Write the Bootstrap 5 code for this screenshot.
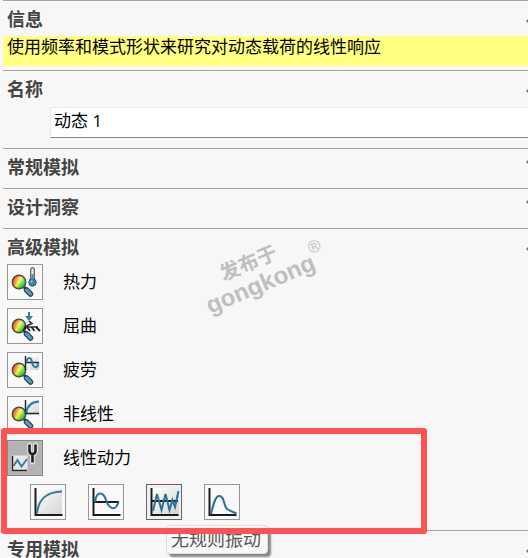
<!DOCTYPE html>
<html lang="zh-CN">
<head>
<meta charset="utf-8">
<meta name="viewport" content="width=device-width, initial-scale=1">
<title>算例</title>
<link href="https://cdn.jsdelivr.net/npm/bootstrap@5.3.0/dist/css/bootstrap.min.css" rel="stylesheet">
<style>
body{background:#f7f7f7;color:#000;font-family:"Open Sans","Noto Sans CJK SC",sans-serif;font-size:17px;line-height:24px}
.panel{padding-left:3px;overflow:hidden}
.group{border-top:1px solid #a6a6a6}
.group-title{font-size:18px;height:35px;line-height:37px;font-weight:700;color:#444;padding-left:4px}
.toggle{width:16px;height:35px;margin-right:-14px;color:#777}
.group.closing .group-title{height:27px;line-height:18px;padding-top:9px}
.group.closing .toggle{height:27px;overflow:hidden}
.message{background:#ffff80;height:30px;line-height:22px;padding-left:4px;margin-bottom:4px}
.name-row{padding:1px 0 10px 47px}
.name-box{height:31px;padding:0 3px 6px;border:1px solid #e8e8e8;border-bottom-color:#858585;border-right:0;background:#fff;color:#000;font-size:17px;line-height:24px}
.closed{padding-bottom:4px}
.study-list{padding:0 0 10px 4px;gap:8px}
.study-label{padding-left:20px}
.tool{width:36px;height:36px;border:1px solid #979797;background:#f9f9f9;padding:0;flex:none}
.tool svg{display:block}
.tool.chosen{background:#b3b3b3;border-color:#858585}
.tool.hovered{border-color:#666;background:#f0f0f0}
.sub-tools{padding:8px 0 0 23px;gap:22px}
.marker{left:-6px;top:-12px;width:426px;bottom:-14px;border:6px solid #ff5252;border-radius:3px;pointer-events:none;z-index:3}
.hint{left:159px;top:85px;padding:0 6px 0 4px;border:1px solid #ddd;border-radius:4px;background:#f9f9f9;box-shadow:3px 3px 2px #888;color:#575757;font-size:18px;line-height:27px;white-space:nowrap;z-index:2}
.stamp{left:200px;top:234px;pointer-events:none}
</style>
<script src="https://cdn.jsdelivr.net/npm/bootstrap@5.3.0/dist/js/bootstrap.bundle.min.js"></script>
</head>
<body>
<svg width="0" height="0" class="position-absolute" aria-hidden="true">
<defs>
<linearGradient id="rainbow" x1="0" y1="0.2" x2="1" y2="0.8"><stop offset="0.05" stop-color="#e8321e"/><stop offset="0.28" stop-color="#f28c32"/><stop offset="0.48" stop-color="#f4f02c"/><stop offset="0.7" stop-color="#50dc28"/><stop offset="1" stop-color="#1eb478"/></linearGradient>
<radialGradient id="gloss" cx="0.6" cy="0.3" r="0.5"><stop offset="0" stop-color="#fff" stop-opacity="0.4"/><stop offset="1" stop-color="#fff" stop-opacity="0"/></radialGradient>
<linearGradient id="sheet" x1="0" y1="0" x2="1" y2="1"><stop offset="0" stop-color="#fff"/><stop offset="1" stop-color="#d4d4d4"/></linearGradient>
<g id="lens"><path d="M16 22l2 2" stroke="#333" stroke-width="3"/><path d="M18.500 25l4 4" stroke="#234b60" stroke-width="5.500" stroke-linecap="round"/><path d="M18.500 25l4 4" stroke="#5aa0c3" stroke-width="3" stroke-linecap="round"/><circle cx="11" cy="17" r="6.7" fill="url(#rainbow)"/><circle cx="11" cy="17" r="6.7" fill="url(#gloss)" stroke="#4a4a42" stroke-width="1.500"/></g>
</defs>
</svg>

<main class="panel position-relative">
<section class="group">
  <div class="d-flex justify-content-between"><h2 class="group-title m-0">信息</h2>
  <button class="toggle btn p-0 border-0 d-flex" aria-label="折叠信息"><svg width="16" height="35" fill="none" stroke="currentColor" stroke-width="3"><path d="M1 21l7-7 7 7"/></svg></button></div>
  <div class="message">使用频率和模式形状来研究对动态载荷的线性响应</div>
</section>

<section class="group">
  <div class="d-flex justify-content-between"><h2 class="group-title m-0"><label for="study-name">名称</label></h2>
  <button class="toggle btn p-0 border-0 d-flex" aria-label="折叠名称"><svg width="16" height="35" fill="none" stroke="currentColor" stroke-width="3"><path d="M1 21l7-7 7 7"/></svg></button></div>
  <div class="name-row"><input id="study-name" class="name-box form-control rounded-0 shadow-none" type="text" value="动态 1"></div>
</section>

<section class="group closed">
  <div class="d-flex justify-content-between"><h2 class="group-title m-0">常规模拟</h2>
  <button class="toggle btn p-0 border-0 d-flex" aria-label="展开常规模拟"><svg width="16" height="35" fill="none" stroke="currentColor" stroke-width="3"><path d="M1 12l7 7 7-7"/></svg></button></div>
</section>

<section class="group closed">
  <div class="d-flex justify-content-between"><h2 class="group-title m-0">设计洞察</h2>
  <button class="toggle btn p-0 border-0 d-flex" aria-label="展开设计洞察"><svg width="16" height="35" fill="none" stroke="currentColor" stroke-width="3"><path d="M1 12l7 7 7-7"/></svg></button></div>
</section>

<section class="group">
  <div class="d-flex justify-content-between"><h2 class="group-title m-0">高级模拟</h2>
  <button class="toggle btn p-0 border-0 d-flex" aria-label="折叠高级模拟"><svg width="16" height="35" fill="none" stroke="currentColor" stroke-width="3"><path d="M1 21l7-7 7 7"/></svg></button></div>

  <div class="study-list d-flex flex-column">
    <div class="d-flex align-items-center">
      <button class="tool" id="thermal"><svg width="34" height="34" fill="none"><use href="#lens"/><path d="M24.500 4.500v13" stroke="#333" stroke-width="4.500" stroke-linecap="round"/><path d="M24.500 4.500v13" stroke="#eef3f5" stroke-width="2.500" stroke-linecap="round"/><circle cx="24.500" cy="17.500" r="3.700" fill="#3f87ad" stroke="#24546e"/><path d="M24.500 9v8" stroke="#3f87ad" stroke-width="2"/><circle cx="23.500" cy="16.500" r="1" fill="#9ccbe0"/></svg></button>
      <label class="study-label" for="thermal">热力</label>
    </div>
    <div class="d-flex align-items-center">
      <button class="tool" id="buckling"><svg width="34" height="34" fill="none"><use href="#lens"/><path d="M21 3v6" stroke="#3a7ca3" stroke-width="2"/><path d="M17 7h8L21 12z" fill="#3a7ca3"/><path d="M21 12l3 2.500-8 3.500h14" stroke="#333" stroke-width="1.600"/><path d="M15 21.500l3-3M19 18l3 4M23.500 18l3 4M28 18l4 4" stroke="#222" stroke-width="1.800"/></svg></button>
      <label class="study-label" for="buckling">屈曲</label>
    </div>
    <div class="d-flex align-items-center">
      <button class="tool" id="fatigue"><svg width="34" height="34" fill="none"><path d="M18 4h13v13H18z" fill="url(#sheet)"/><use href="#lens"/><path d="M17.500 3v14M17.500 9.500H31" stroke="#222" stroke-width="1.400"/><path d="M18.500 9.500C19 3.500 23 3.500 24 9s5.500 8 6.500 0.500" stroke="#2f7ba3" stroke-width="2"/></svg></button>
      <label class="study-label" for="fatigue">疲劳</label>
    </div>
    <div class="d-flex align-items-center">
      <button class="tool" id="nonlinear"><svg width="34" height="34" fill="none"><path d="M18 4h13v12H18z" fill="url(#sheet)"/><use href="#lens"/><path d="M17.500 3v13.500H31" stroke="#222" stroke-width="1.400"/><path d="M18.500 16C19 9 23 5 31 4.500" stroke="#2f7ba3" stroke-width="2"/></svg></button>
      <label class="study-label" for="nonlinear">非线性</label>
    </div>

    <div class="position-relative">
      <div class="d-flex align-items-center">
        <button class="tool chosen" id="dynamic" aria-pressed="true"><svg width="34" height="34" fill="none"><path d="M3.500 14.500h16v16h-16z" fill="#e8e8e8"/><path d="M4.500 15v14.500H19" stroke="#222" stroke-width="1.400"/><path d="M5.500 25l4-6 4 6.500 5.500-7.500" stroke="#2f7ba3" stroke-width="1.900"/><path d="M21.500 4v5.500q0 3.500 3 3.500t3-3.500V4M24.500 13v8" stroke="#e0e0e0" stroke-width="5" stroke-linecap="round"/><path d="M21.500 3.500v6q0 3.500 3 3.500t3-3.500v-6M24.500 13v8.500" stroke="#222" stroke-width="2.600"/></svg></button>
        <label class="study-label" for="dynamic">线性动力</label>
      </div>
      <div class="sub-tools d-flex">
        <button class="tool" aria-label="模态时间历史"><svg width="34" height="34" fill="none"><path d="M4 4h27v26H4z" fill="url(#sheet)"/><path d="M4.500 3v27H31.500" stroke="#1c1c1c" stroke-width="2"/><path d="M6 28.500C7.500 14 15 7 31 6.500" stroke="#2f7ba3" stroke-width="2"/></svg></button>
        <button class="tool" aria-label="谐波"><svg width="34" height="34" fill="none"><path d="M4.500 3v27H31.500M4.500 17H30" stroke="#1c1c1c" stroke-width="2"/><path d="M6 17C7.500 6 14 6 17 15s9.500 12 12.500 2" stroke="#2b6f95" stroke-width="2"/></svg></button>
        <button class="tool hovered" aria-label="无规则振动" aria-describedby="vibration-hint"><svg width="34" height="34" fill="none"><path d="M3 3h29v28H3z" fill="url(#sheet)"/><path d="M4.500 3v27H31.500M4.500 16H31" stroke="#1c1c1c" stroke-width="2"/><path d="M6 26l4-17 4.500 16 4-16 4 16 3-10 2.500 7 3.500-16" stroke="#2b7299" stroke-width="2"/></svg></button>
        <button class="tool" aria-label="响应波谱"><svg width="34" height="34" fill="none"><path d="M4.500 3v27H31.500" stroke="#1c1c1c" stroke-width="2"/><path d="M6 29C9 16 11 11 14 11c6 0 4 9 8 13 3 2 6 3 9.500 4.500" stroke="#2b7299" stroke-width="2"/></svg></button>
      </div>
      <div class="hint position-absolute" id="vibration-hint" role="tooltip">无规则振动</div>
      <div class="marker position-absolute"></div>
    </div>
  </div>
</section>

<section class="group closing">
  <div class="d-flex justify-content-between"><h2 class="group-title m-0">专用模拟</h2>
  <button class="toggle btn p-0 border-0 d-flex" aria-label="折叠专用模拟"><svg class="flex-shrink-0" width="16" height="35" fill="none" stroke="currentColor" stroke-width="3"><path d="M1 21l7-7 7 7"/></svg></button></div>
</section>

<svg class="stamp position-absolute" width="130" height="100" fill="#bfbfbf" font-weight="700" text-anchor="middle">
  <g transform="translate(61 51) rotate(-23)">
    <text x="0" y="7" font-family="Liberation Sans, sans-serif" font-size="24">gongkong</text>
    <text x="-3" y="-18" font-family="Noto Sans CJK SC, sans-serif" font-size="20" font-weight="700">发布于</text>
    <text x="64" y="-9" font-family="Liberation Sans, sans-serif" font-size="17" font-weight="400">®</text>
  </g>
</svg>
</main>
</body>
</html>
